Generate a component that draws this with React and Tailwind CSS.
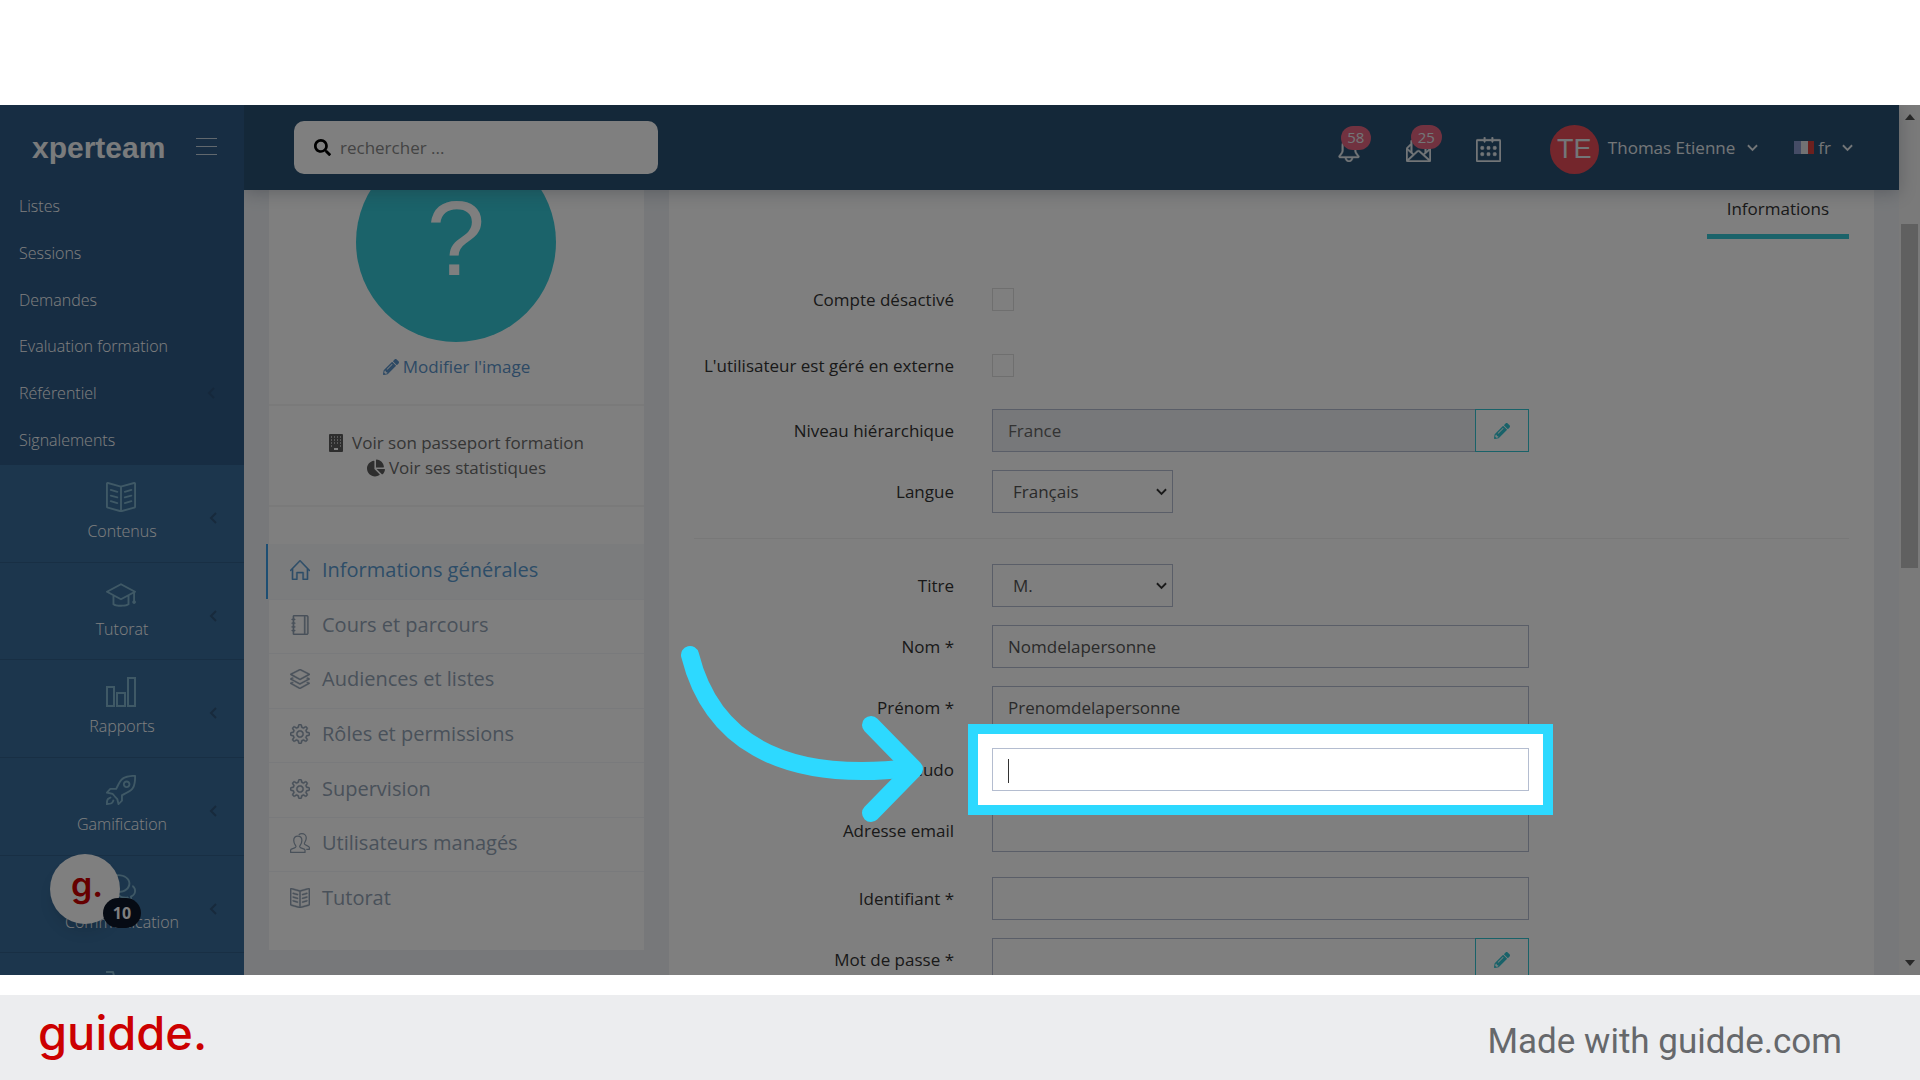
import React from "react";
import { FaSearch, FaPencilAlt, FaChartPie } from "react-icons/fa";
import {
  SlBell,
  SlEnvolopeLetter,
  SlCalender,
  SlBookOpen,
  SlGraduation,
  SlRocket,
  SlBubbles,
  SlHome,
  SlNotebook,
  SlLayers,
  SlSettings,
} from "react-icons/sl";

const BarsIcon = ({ className }) => (
  <svg viewBox="0 0 30 30" className={className} fill="none" stroke="currentColor" strokeWidth="2" aria-hidden="true">
    <path d="M1 10h7v19H1zM11 16h8v13h-8zM22 1h7v28h-7z" />
  </svg>
);

const CartIcon = ({ className }) => (
  <svg viewBox="0 0 30 30" className={className} fill="none" stroke="currentColor" strokeWidth="2" strokeLinejoin="round" aria-hidden="true">
    <path d="M0 2h7l5 19h14l3-12H9" />
    <circle cx="13" cy="26" r="2" />
    <circle cx="24" cy="26" r="2" />
  </svg>
);

const UsersIcon = ({ className }) => (
  <svg viewBox="0 0 32 32" className={className} fill="none" stroke="currentColor" strokeWidth="2" strokeLinejoin="round" aria-hidden="true">
    <path d="M1 31v-4c0-2 7-2 8.500-5 .8-1.800-3.500-4-3.500-10 0-4 2-7 6.500-7S19 8 19 12c0 6-4 8.200-3.500 10 1 3 8.500 3 8.500 5v4z" />
    <path d="M14 3c1.500-1.500 3-2 5-2 4 0 7 3 7 7 0 5-3.500 7.500-3 9.500C23.500 20 31 20.500 31 23v3h-5" />
  </svg>
);

const BuildingIcon = ({ className }) => (
  <svg viewBox="0 0 14 18" className={className} aria-hidden="true">
    <rect width="14" height="18" rx="1" fill="currentColor" />
    <g fill="#fff" fillOpacity="0.55">
      {[2, 5, 8].map((y) =>
        [2, 5, 8, 11].map((x) => <rect key={`${x}-${y}`} x={x} y={y} width="1" height="2" />)
      )}
      <rect x="2" y="11" width="1" height="2" />
      <rect x="11" y="11" width="1" height="2" />
    </g>
    <rect x="5" y="14" width="4" height="2" fill="#fff" />
  </svg>
);

const Chevron = ({ className, d = "M1 1l5 5 5-5", box = "0 0 12 8" }) => (
  <svg viewBox={box} className={className} fill="none" stroke="currentColor" strokeWidth="2" aria-hidden="true">
    <path d={d} />
  </svg>
);
const ChevronLeft = ({ className }) => <Chevron className={className} box="0 0 8 12" d="M7 1L2 6l5 5" />;

const subItems = ["Listes", "Sessions", "Demandes", "Evaluation formation", "Référentiel", "Signalements"];

const modules = [
  ["Contenus", SlBookOpen],
  ["Tutorat", SlGraduation],
  ["Rapports", BarsIcon],
  ["Gamification", SlRocket],
  ["Communication", SlBubbles],
];

const profileLinks = [
  ["Informations générales", SlHome],
  ["Cours et parcours", SlNotebook],
  ["Audiences et listes", SlLayers],
  ["Rôles et permissions", SlSettings],
  ["Supervision", SlSettings],
  ["Utilisateurs managés", UsersIcon],
  ["Tutorat", SlBookOpen],
];

function Sidebar() {
  return (
    <aside className="relative z-20 w-[244px] shrink-0 bg-[#386c9a] text-[16px] font-light text-white">
      <div className="bg-[#2e5a86] pb-0.5">
        <div className="flex h-[78px] items-center justify-between pt-2 pr-[27px] pl-8">
          <a href="#accueil" className="font-['Liberation_Sans'] text-[30px] leading-9 font-bold text-[#f4f6f8]">xperteam</a>
          <button type="button" aria-label="Menu" className="flex w-[21px] flex-col gap-[7px] pb-1">
            <span className="h-px bg-[#c3d0dc]" />
            <span className="h-px bg-[#c3d0dc]" />
            <span className="h-px bg-[#c3d0dc]" />
          </button>
        </div>
        <nav className="grid h-[280px] auto-rows-fr">
          {subItems.map((label) => (
            <a key={label} href="#menu" className="flex items-center justify-between pr-[29px] pl-[19px]">
              {label}
              {label === "Référentiel" && <ChevronLeft className="h-3 w-2 text-[#2a4f76]" />}
            </a>
          ))}
        </nav>
      </div>
      <nav className="grid h-[586px] auto-rows-fr">
        {modules.map(([label, Icon]) => (
          <a key={label} href="#module" className="relative flex flex-col items-center border-b border-[#305f89] pt-[17px]">
            <Icon className="mr-[3px] h-[30px] w-[30px] text-[#7fb2cc]" />
            <span className="mt-[7px] leading-6">{label}</span>
            <ChevronLeft className="absolute top-[47px] right-[27px] h-3 w-2 text-[#2f5478]" />
          </a>
        ))}
        <a href="#module" aria-label="Catalogue" className="flex flex-col items-center pt-[17px]">
          <CartIcon className="mr-[3px] h-[30px] w-[30px] text-[#7fb2cc]" />
        </a>
      </nav>
      <button type="button" aria-label="guidde" className="absolute bottom-[51px] left-[50px] h-[70px] w-[70px] rounded-full bg-white shadow-lg">
        <span className="block pb-2 pl-1 font-['Inter'] text-[34px] leading-[54px] font-semibold text-[#cc0000]">g.</span>
        <span className="absolute -right-[21px] -bottom-1 flex h-[30px] w-[38px] items-center justify-center rounded-full bg-[#0c1628] font-['Open_Sans'] text-[16px] font-bold text-white">10</span>
      </button>
    </aside>
  );
}

function Header() {
  return (
    <header className="relative z-10 flex h-[85px] shrink-0 items-center bg-[#285072] pr-[46px] pl-[50px] text-[17px] text-[#e6ecf0] shadow-[0_3px_16px_rgba(60,70,90,0.3)]">
      <label className="flex h-[53px] w-[364px] items-center gap-[9px] rounded-[10px] bg-white px-5">
        <FaSearch className="h-[17px] w-[17px] text-black" />
        <input type="text" placeholder="rechercher ..." aria-label="rechercher" className="min-w-0 flex-1 outline-none placeholder:text-[#888]" />
      </label>
      <div className="ml-auto flex items-center">
        <div className="flex items-center pt-1">
          <button type="button" aria-label="Notifications" className="relative mr-[45px]">
            <SlBell strokeWidth={20} className="h-6 w-6" />
            <span className="absolute -top-3 left-1 flex h-6 w-[30px] items-center justify-center rounded-full bg-[#e36480] text-[15px]">58</span>
          </button>
          <button type="button" aria-label="Messages" className="relative mr-[45px]">
            <SlEnvolopeLetter strokeWidth={20} className="h-[25px] w-[25px]" />
            <span className="absolute -top-3 left-[5px] flex h-6 w-[31px] items-center justify-center rounded-full bg-[#e36480] text-[15px]">25</span>
          </button>
          <button type="button" aria-label="Calendrier" className="mr-[49px]">
            <SlCalender strokeWidth={20} className="h-[25px] w-[25px]" />
          </button>
          <span className="mr-[9px] flex h-[49px] w-[49px] items-center justify-center rounded-full bg-[#e84c58] font-['Liberation_Sans'] text-[27px]">TE</span>
        </div>
        <button type="button" className="flex items-center gap-[12px]">
          <span>Thomas Etienne</span>
          <Chevron className="h-2 w-[11px]" />
        </button>
        <button type="button" className="ml-9 flex items-center">
          <svg viewBox="0 0 20 13" className="h-[13px] w-5" aria-hidden="true">
            <path fill="#8a98cc" d="M0 0h7v13H0z" />
            <path fill="#e4e4e8" d="M7 0h7v13H7z" />
            <path fill="#d8403c" d="M14 0h6v13h-6z" />
          </svg>
          <span className="ml-1">fr</span>
          <Chevron className="ml-[11px] h-2 w-[11px]" />
        </button>
      </div>
    </header>
  );
}

function ProfileCard() {
  return (
    <section className="w-[375px] shrink-0 self-start bg-white pb-6 text-[17px]">
      <div className="flex flex-col items-center border-b-2 border-[#f5f5f5] pt-[30px]">
        <div className="mr-px flex h-[200px] w-[200px] items-center justify-center rounded-full bg-[#36c6d4] pb-2 font-['Liberation_Sans'] text-[105px] leading-none text-white">?</div>
        <a href="#image" className="mt-3 mb-6 flex items-center gap-1 leading-[26px] text-[#5b93c9]">
          <FaPencilAlt className="h-4 w-4" />
          Modifier l'image
        </a>
      </div>
      <div className="flex flex-col items-center border-b-2 border-[#f5f5f5] pt-6 pb-[25px] leading-[25px] text-[#6b6b6b]">
        <a href="#passeport" className="flex items-center gap-[9px]">
          <BuildingIcon className="h-[18px] w-[14px] text-[#5c5c5c]" />
          Voir son passeport formation
        </a>
        <a href="#statistiques" className="flex items-center gap-1">
          <FaChartPie className="h-[18px] w-[18px] text-[#5c5c5c]" />
          Voir ses statistiques
        </a>
      </div>
      <nav className="mt-[37px] grid h-[382px] auto-rows-fr text-[20px] text-[#93a3b5]">
        {profileLinks.map(([label, Icon], i) => (
          <a
            key={label}
            href="#section"
            className={
              i === 0
                ? "-ml-[3px] flex items-center gap-3 border-l-2 border-[#3a9ce6] bg-[#f6f9fb] pb-[2px] pl-[22px] text-[#5b9bd1]"
                : "flex items-center gap-3 border-t border-[#f3f5f8] pb-[3px] pl-[21px]"
            }
          >
            <Icon strokeWidth={20} className="h-5 w-5" />
            {label}
          </a>
        ))}
      </nav>
    </section>
  );
}

const inputClass =
  "h-[43px] w-full min-w-0 flex-1 border border-[#b4bdd0] bg-white px-[15px] text-[17px] text-[#555] outline-none";

function Row({ id, label, children, className = "mb-[18px]" }) {
  return (
    <div className={`grid grid-cols-[260fr_857fr] items-center gap-[38px] ${className}`}>
      <label htmlFor={id} className="text-right whitespace-nowrap text-[#333]">{label}</label>
      <div className="relative flex w-full max-w-[537px]">{children}</div>
    </div>
  );
}

const Check = ({ id }) => (
  <input id={id} type="checkbox" className="h-[23px] w-[22px] appearance-none border border-[#dedede] bg-white" />
);

const EditButton = ({ label }) => (
  <button type="button" aria-label={label} className="-ml-px flex w-[54px] items-center justify-center border border-[#32c5d2] bg-white text-[#32c5d2]">
    <FaPencilAlt className="h-4 w-4" />
  </button>
);

function Select({ id, value }) {
  return (
    <div className="relative w-[181px]">
      <select id={id} defaultValue={value} className="h-[43px] w-full appearance-none border border-[#b4bdd0] bg-white px-5 text-[17px] text-[#555]">
        <option>{value}</option>
      </select>
      <Chevron className="pointer-events-none absolute top-[18px] right-[6px] h-2 w-[11px] text-[#333]" />
    </div>
  );
}

function Spotlight() {
  return (
    <>
      <span className="absolute top-[11px] left-4 h-6 w-px bg-[#333]" />
      <div className="pointer-events-none absolute -inset-6 z-40 border-[10px] border-[#2dd9ff] shadow-[0_0_0_3000px_rgba(0,0,0,0.5)]" />
      <svg viewBox="680 640 250 185" className="pointer-events-none absolute -top-[108px] -left-[312px] z-50 h-[185px] w-[250px]" fill="none" stroke="#2dd9ff" strokeWidth="18" strokeLinecap="round" strokeLinejoin="round" aria-hidden="true">
        <path d="M690 655C710 735 775 784 911 768" />
        <path d="M871 725L914 769L871 813" />
      </svg>
    </>
  );
}

function FormCard() {
  return (
    <section className="min-w-0 flex-1 bg-white px-[25px] pb-10 text-[17px]">
      <div className="flex h-[127px] items-end justify-end">
        <a href="#informations" className="border-b-[5px] border-[#36c6d4] px-5 pb-[13px] text-[#333]">Informations</a>
      </div>
      <form className="pt-12">
        <Row id="desactive" label="Compte désactivé" className="mb-[43px] h-[23px]"><Check id="desactive" /></Row>
        <Row id="externe" label="L'utilisateur est géré en externe" className="mb-[33px] h-[23px]"><Check id="externe" /></Row>
        <Row id="niveau" label="Niveau hiérarchique">
          <input id="niveau" type="text" readOnly defaultValue="France" className="h-[43px] min-w-0 flex-1 border border-[#b4bdd0] bg-[#eef1f5] px-[15px] text-[17px] text-[#666] outline-none" />
          <EditButton label="Modifier le niveau" />
        </Row>
        <Row id="langue" label="Langue" className=""><Select id="langue" value="Français" /></Row>
        <hr className="my-[25px] border-[#f0f0f0]" />
        <Row id="titre" label="Titre"><Select id="titre" value="M." /></Row>
        <Row id="nom" label="Nom *"><input id="nom" type="text" defaultValue="Nomdelapersonne" className={inputClass} /></Row>
        <Row id="prenom" label="Prénom *"><input id="prenom" type="text" defaultValue="Prenomdelapersonne" className={inputClass} /></Row>
        <Row id="pseudo" label="Pseudo" className="mt-[19px] mb-[18px]">
          <input id="pseudo" type="text" className={inputClass} />
          <Spotlight />
        </Row>
        <Row id="email" label="Adresse email" className="mb-[25px]"><input id="email" type="email" className={inputClass} /></Row>
        <Row id="identifiant" label="Identifiant *"><input id="identifiant" type="text" className={inputClass} /></Row>
        <Row id="motdepasse" label="Mot de passe *">
          <input id="motdepasse" type="password" className={inputClass} />
          <EditButton label="Modifier le mot de passe" />
        </Row>
      </form>
    </section>
  );
}

function Scrollbar() {
  return (
    <div className="flex w-[21px] shrink-0 flex-col items-center bg-[#f4f4f4] py-[9px]" aria-hidden="true">
      <svg viewBox="0 0 10 6" className="h-[6px] w-[10px]"><path d="M5 0l5 6H0z" fill="#505050" /></svg>
      <div className="mt-[104px] h-[344px] w-[17px] bg-[#c1c1c1]" />
      <svg viewBox="0 0 10 6" className="mt-auto h-[6px] w-[10px]"><path d="M0 0h10L5 6z" fill="#505050" /></svg>
    </div>
  );
}

export default function App() {
  return (
    <div className="flex h-screen flex-col overflow-hidden bg-white pt-[105px] font-['Open_Sans',sans-serif]">
      <div className="flex min-h-0 flex-1 overflow-hidden">
        <Sidebar />
        <div className="flex min-w-0 flex-1 flex-col bg-[#eef1f5]">
          <Header />
          <main className="-mt-[78px] flex gap-[25px] px-[25px]">
            <ProfileCard />
            <FormCard />
          </main>
        </div>
        <Scrollbar />
      </div>
      <footer className="mt-5 flex h-[85px] shrink-0 items-center justify-between bg-[#ecedef] pr-[78px] pl-[38px]">
        <a href="#guidde" className="pb-2.5 font-['Inter'] text-[47px] leading-none font-medium text-[#cc0000]">guidde.</a>
        <p className="pt-2 font-['Roboto'] text-[35px] leading-none text-[#66686b]">Made with guidde.com</p>
      </footer>
    </div>
  );
}
